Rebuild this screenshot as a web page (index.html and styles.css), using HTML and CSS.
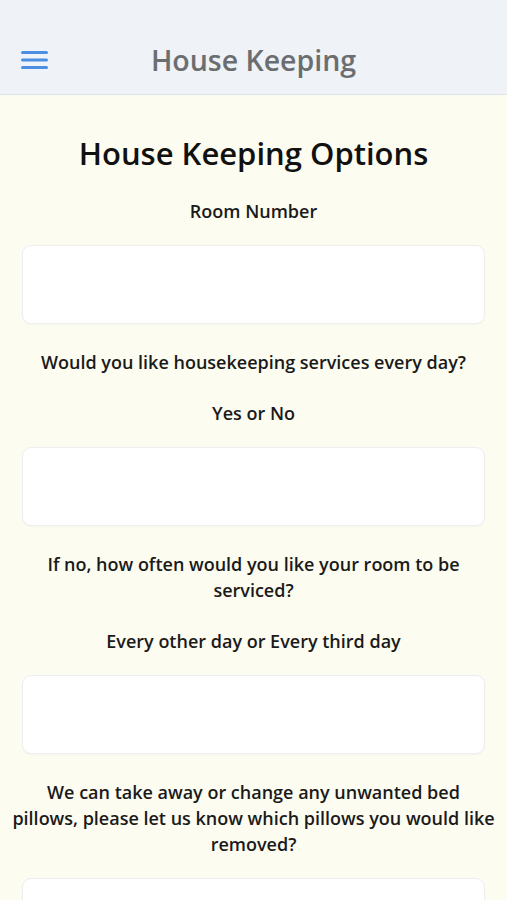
FILE: index.html
```html
<!DOCTYPE html>
<html lang="en">
<head>
    <meta charset="UTF-8">
    <title>House Keeping</title>
    <link rel="stylesheet" href="styles.css">
</head>
<body>
<div class="header">
    <div class="menu-btn">
        <svg width="28" height="20" viewBox="0 0 28 20">
            <rect x="0" y="1" width="27" height="3" rx="1.5" fill="#4a8fe2"/>
            <rect x="0" y="8.5" width="27" height="3" rx="1.5" fill="#4a8fe2"/>
            <rect x="0" y="16" width="27" height="3" rx="1.5" fill="#4a8fe2"/>
        </svg>
    </div>
    <div class="header-title">House Keeping</div>
</div>
<div class="content">
    <h1 class="page-title">House Keeping Options</h1>
    <div class="question">
        <p class="label">Room Number</p>
        <input type="text" class="field">
    </div>
    <div class="question">
        <p class="label">Would you like housekeeping services every day?</p>
        <p class="label">Yes or No</p>
        <input type="text" class="field">
    </div>
    <div class="question">
        <p class="label">If no, how often would you like your room to be serviced?</p>
        <p class="label">Every other day or Every third day</p>
        <input type="text" class="field">
    </div>
    <div class="question">
        <p class="label">We can take away or change any unwanted bed<br>pillows, please let us know which pillows you would like removed?</p>
        <input type="text" class="field">
    </div>
</div>
</body>
</html>
```

FILE: styles.css
```css
html, body {
    margin: 0;
    padding: 0;
    background-color: #fdfcf0;
    font-family: "Open Sans", "Noto Sans", sans-serif;
}

.header {
    height: 94px;
    border-bottom: 1px solid #dfe2e6;
    background-color: #eff2f6;
    display: flex;
    align-items: flex-end;
    position: relative;
}

.menu-btn {
    width: 60px;
    padding: 0 0 24px 21px;
    line-height: 0;
}

.header-title {
    position: absolute;
    left: 0;
    right: 0;
    bottom: 15px;
    text-align: center;
    font-size: 28.5px;
    font-weight: 600;
    color: #6b6e70;
    pointer-events: none;
}

.content {
    padding: 0 10px 40px;
    text-align: center;
}

.page-title {
    margin: 38px 0 0;
    font-size: 31px;
    line-height: 40px;
    font-weight: 600;
    color: #111;
}

.label {
    margin: 25px 0 0;
    font-size: 18px;
    line-height: 26px;
    font-weight: 600;
    color: #1a1a1a;
}

.field {
    display: block;
    box-sizing: border-box;
    width: calc(100% - 24px);
    height: 79px;
    margin: 21px 12px 0;
    border: 1px solid #eceef2;
    border-radius: 9px;
    background-color: #fff;
    outline: none;
    box-shadow: 0 1px 2px rgba(0, 0, 0, 0.03);
}
```
